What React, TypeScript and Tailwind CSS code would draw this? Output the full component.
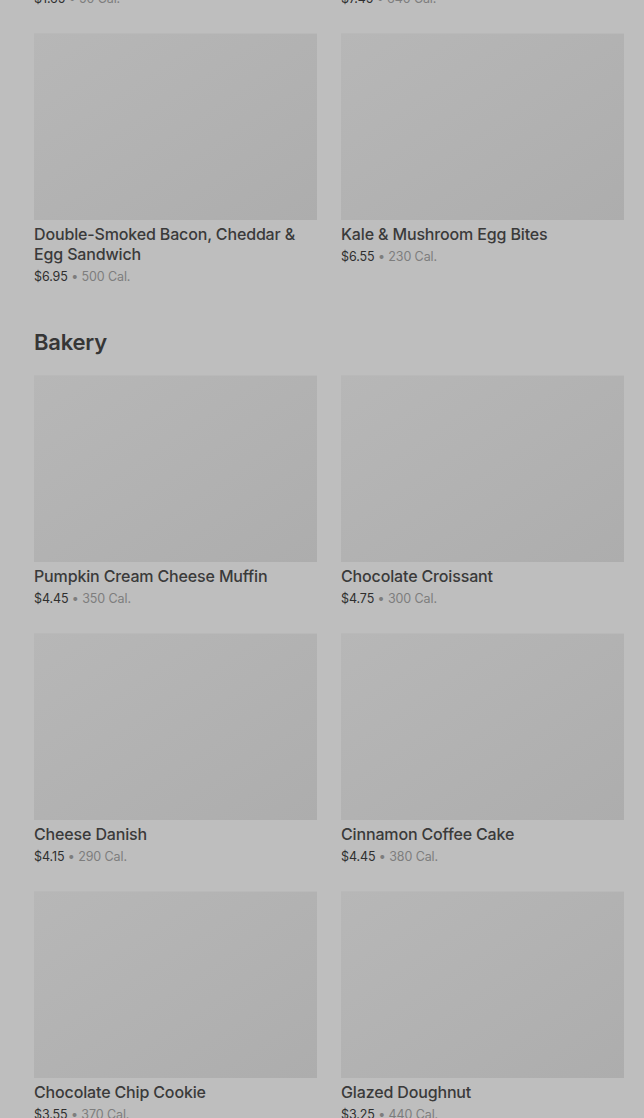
type Item = { name: string; price: string; cal: string };

const breakfastTail: { price: string; cal: string }[] = [
  { price: "$1.65", cal: "50 Cal." },
  { price: "$7.45", cal: "640 Cal." },
];

const breakfast: Item[] = [
  { name: "Double-Smoked Bacon, Cheddar & Egg Sandwich", price: "$6.95", cal: "500 Cal." },
  { name: "Kale & Mushroom Egg Bites", price: "$6.55", cal: "230 Cal." },
];

const bakery: Item[] = [
  { name: "Pumpkin Cream Cheese Muffin", price: "$4.45", cal: "350 Cal." },
  { name: "Chocolate Croissant", price: "$4.75", cal: "300 Cal." },
  { name: "Cheese Danish", price: "$4.15", cal: "290 Cal." },
  { name: "Cinnamon Coffee Cake", price: "$4.45", cal: "380 Cal." },
  { name: "Chocolate Chip Cookie", price: "$3.55", cal: "370 Cal." },
  { name: "Glazed Doughnut", price: "$3.25", cal: "440 Cal." },
];

function Price({ price, cal }: { price: string; cal: string }) {
  return (
    <p className="text-[12.5px] leading-5 tracking-[-0.1px] text-[#2f2f2f]">
      {price}
      <span className="text-[#7d7d7d]"> • {cal}</span>
    </p>
  );
}

function Card({ item }: { item: Item }) {
  return (
    <div className="flex flex-col">
      <div className="h-[187px] w-full bg-gradient-to-br from-[#b7b7b7] to-[#adadad] border-t border-[#b9b9b9]"></div>
      <p className="mt-1 text-[16px] leading-5 font-medium tracking-[-0.15px] text-[#3a3a3a]">
        {item.name}
      </p>
      <div className="mt-[3px]">
        <Price price={item.price} cal={item.cal} />
      </div>
    </div>
  );
}

export default function App() {
  return (
    <div
      className="min-h-[1118px] bg-[#bebebe] pl-[34px] pr-[20px] overflow-hidden"
      style={{ fontFamily: "Inter, 'Noto Sans', sans-serif" }}
    >
      <div className="grid grid-cols-2 gap-x-6 -mt-[11px]">
        {breakfastTail.map((p) => (
          <Price key={p.price} price={p.price} cal={p.cal} />
        ))}
      </div>
      <div className="grid grid-cols-2 gap-x-6 gap-y-6 mt-6">
        {breakfast.map((item) => (
          <Card key={item.name} item={item} />
        ))}
      </div>
      <h2 className="mt-[39px] mb-[17px] h-8 text-[22px] leading-8 font-semibold tracking-[-0.2px] text-[#363636]">
        Bakery
      </h2>
      <div className="grid grid-cols-2 gap-x-6 gap-y-6">
        {bakery.map((item) => (
          <Card key={item.name} item={item} />
        ))}
      </div>
    </div>
  );
}
